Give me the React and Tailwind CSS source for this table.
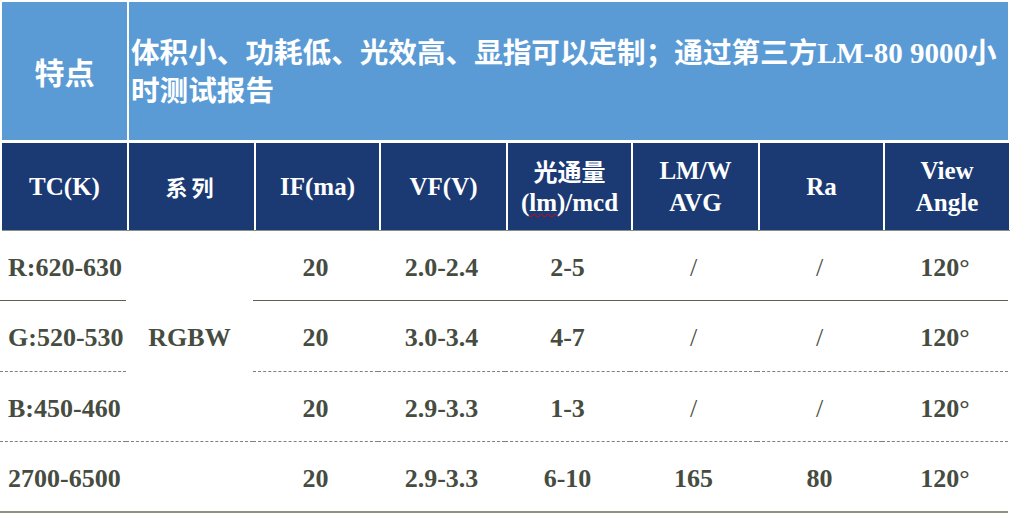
const cols = 'grid-cols-[125px_125px_123px_125px_123px_125px_123px_124px]';

const serif = { fontFamily: '"Liberation Serif", "Noto Sans CJK SC", serif' };
const cjk = { fontFamily: '"Noto Sans CJK SC", serif' };

const headers = [
  ['TC(K)'],
  ['系列'],
  ['IF(ma)'],
  ['VF(V)'],
  ['光通量', 'lm'],
  ['LM/W', 'AVG'],
  ['Ra'],
  ['View', 'Angle'],
];

const rows = [
  { tc: 'R:620-630', vals: ['20', '2.0-2.4', '2-5', '/', '/', '120°'], line: 'border-solid border-[#5b6152]' },
  { tc: 'G:520-530', vals: ['20', '3.0-3.4', '4-7', '/', '/', '120°'], line: 'border-dashed border-[#7d8275]' },
  { tc: 'B:450-460', vals: ['20', '2.9-3.3', '1-3', '/', '/', '120°'], line: 'border-dashed border-[#7d8275]' },
];

const HeaderCell = ({ h }) => {
  if (h[0] === '光通量') {
    return (
      <div className="flex flex-col items-center justify-center leading-[32px]">
        <span className="text-[24px] font-bold" style={cjk}>光通量</span>
        <span className="text-[25px] font-bold">
          (<span className="underline decoration-wavy decoration-red-600 decoration-1 underline-offset-2">lm</span>)/mcd
        </span>
      </div>
    );
  }
  if (h[0] === '系列') {
    return (
      <div className="flex items-center justify-center text-[22px] font-bold tracking-[4px]" style={cjk}>
        系列
      </div>
    );
  }
  return (
    <div className="flex flex-col items-center justify-center text-[25px] font-bold leading-[32px]">
      {h.map((t) => (
        <span key={t}>{t}</span>
      ))}
    </div>
  );
};

export default function App() {
  return (
    <div className="w-[1018px] h-[518px] bg-white pt-[2px] pl-[2px]" style={serif}>
      {/* 特点 */}
      <div className="grid grid-cols-[125px_879px] gap-x-[2px] h-[138px]">
        <div className="bg-[#5b9bd5] flex items-center justify-center text-white text-[30px] font-bold" style={cjk}>
          特点
        </div>
        <div className="bg-[#5b9bd5] flex items-center pl-[2px] text-white text-[29px] font-bold leading-[36px] whitespace-nowrap">
          <div>
            <span className="text-[28.6px]" style={cjk}>体积小、功耗低、光效高、显指可以定制；通过第三方</span>
            <span>LM-80 9000</span>
            <span className="text-[28.6px]" style={cjk}>小</span>
            <br />
            <span className="text-[28.6px]" style={cjk}>时测试报告</span>
          </div>
        </div>
      </div>

      {/* header */}
      <div className={`grid ${cols} gap-x-[2px] mt-[3px] h-[88px] border-b border-[#8a8f84] w-[1008px]`}>
        {headers.map((h) => (
          <div key={h[0]} className="bg-[#1b3a73] text-white flex items-center justify-center">
            <HeaderCell h={h} />
          </div>
        ))}
      </div>

      {/* data */}
      <div className="grid grid-cols-[126px_127px_125px_127px_125px_127px_125px_126px] grid-rows-[70px_71px_70px_71px] -ml-[2px] w-[1010px] text-[26px] font-bold text-[#464c3f]">
        {rows.map((r, i) => (
          <div key={r.tc} className="contents">
            <div className={`flex items-center pl-[8px] pt-[3px] border-b ${r.line}`}>{r.tc}</div>
            {i === 0 && (
              <div className="row-span-3 flex items-center justify-center pt-[3px] border-b border-dashed border-[#7d8275]">RGBW</div>
            )}
            {r.vals.map((v, j) => (
              <div key={j} className={`flex items-center justify-center pt-[3px] border-b ${r.line} ${v === '/' ? 'font-normal' : ''}`}>
                {v}
              </div>
            ))}
          </div>
        ))}
        <div className="flex items-center pl-[8px] pt-[3px] border-b-2 border-[#8c9385]">2700-6500</div>
        {['', '20', '2.9-3.3', '6-10', '165', '80', '120°'].map((v, j) => (
          <div key={j} className="flex items-center justify-center pt-[3px] border-b-2 border-[#8c9385]">
            {v}
          </div>
        ))}
      </div>
    </div>
  );
}
